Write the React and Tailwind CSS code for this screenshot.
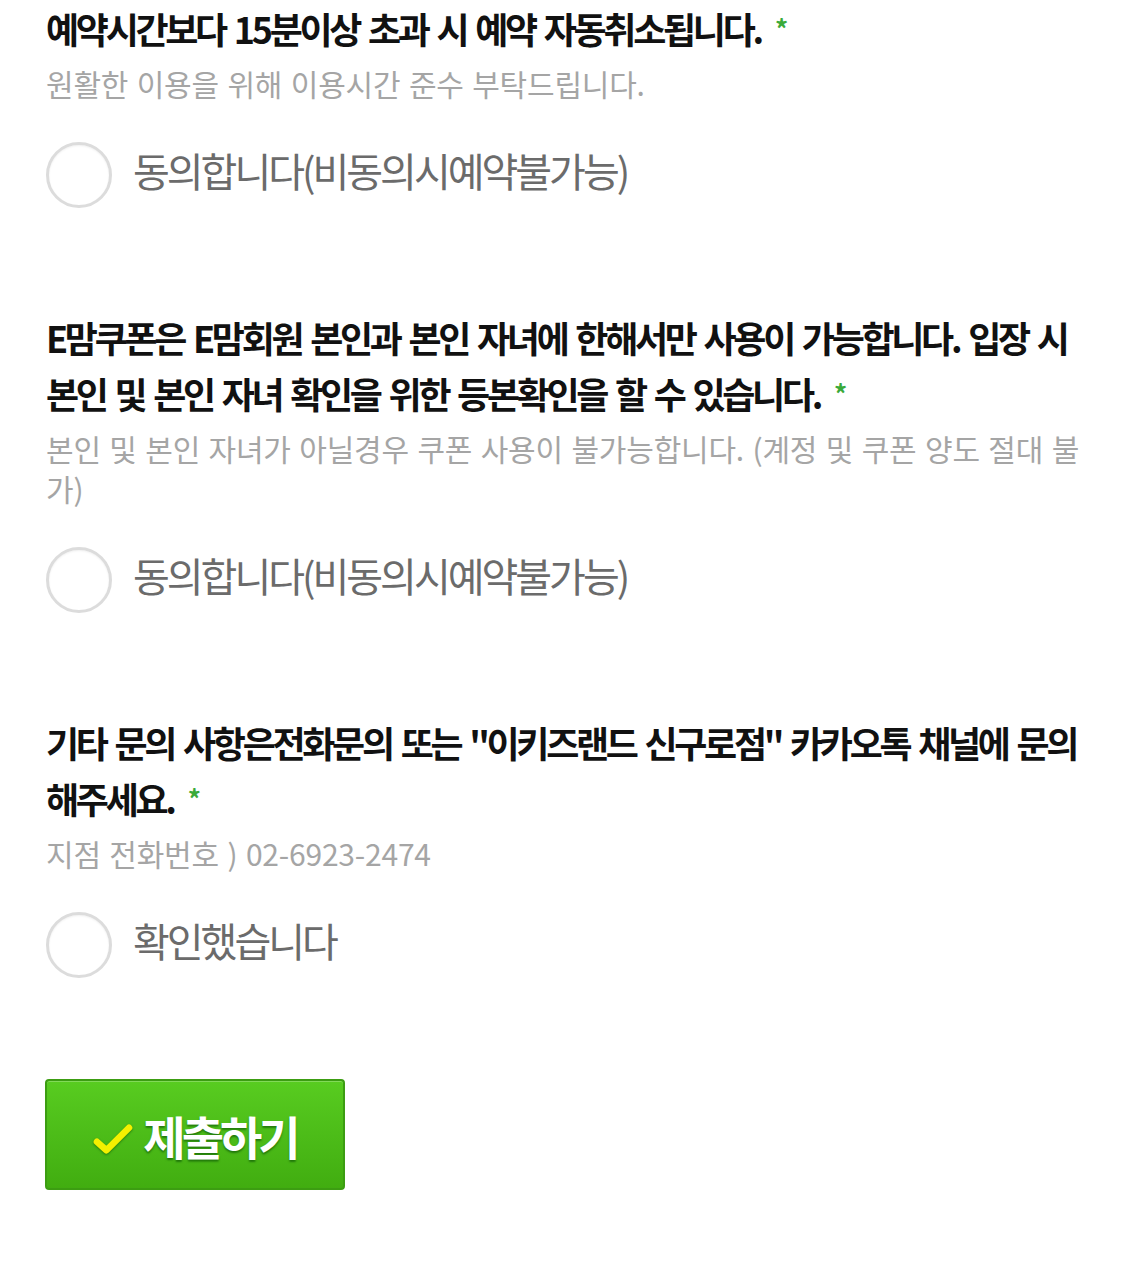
const FONT = { fontFamily: '"Noto Sans CJK KR", "Noto Sans", sans-serif' };

const sections = [
  {
    title: "예약시간보다 15분이상 초과 시 예약 자동취소됩니다.",
    desc: "원활한 이용을 위해 이용시간 준수 부탁드립니다.",
    option: "동의합니다(비동의시예약불가능)",
  },
  {
    title:
      "E맘쿠폰은 E맘회원 본인과 본인 자녀에 한해서만 사용이 가능합니다. 입장 시 본인 및 본인 자녀 확인을 위한 등본확인을 할 수 있습니다.",
    desc: "본인 및 본인 자녀가 아닐경우 쿠폰 사용이 불가능합니다. (계정 및 쿠폰 양도 절대 불가)",
    option: "동의합니다(비동의시예약불가능)",
  },
  {
    title: '기타 문의 사항은전화문의 또는 "이키즈랜드 신구로점" 카카오톡 채널에 문의해주세요.',
    desc: "지점 전화번호 ) 02-6923-2474",
    option: "확인했습니다",
  },
];

const Radio = () => (
  <span className="block w-[66px] h-[66px] shrink-0 rounded-full border-[3px] border-[#dcdcdc] bg-white shadow-[inset_0_1px_2px_rgba(0,0,0,0.06)]" />
);

const Question = ({ title, desc, option }) => (
  <div className="mb-[101px]">
    <p className="text-[36px] leading-[56px] font-bold text-[#111] tracking-[-3.3px] [word-spacing:4px]">
      {title}
      <span className="ml-[14px] text-[26px] align-top text-[#3aaa3a] tracking-normal">*</span>
    </p>
    <p className="mt-[7px] text-[30px] leading-[40px] text-[#a5a5a5] tracking-[-0.2px] [word-spacing:2px] break-all">
      {desc}
    </p>
    <div className="mt-[39px] flex items-center gap-[21px]">
      <Radio />
      <span className="-mt-[10px] text-[40px] leading-[50px] text-[#6b6b6b] tracking-[-3px]">
        {option}
      </span>
    </div>
  </div>
);

export default function App() {
  return (
    <div className="min-h-screen bg-white pl-[46px]" style={FONT}>
      <div className="w-[1040px]">
        {sections.map((s, i) => (
          <Question key={i} {...s} />
        ))}
        <button className="mt-[5px] -ml-px flex items-center justify-center gap-[10px] w-[300px] h-[111px] rounded-[4px] border-2 border-[#3c9d12] bg-gradient-to-b from-[#58cc20] to-[#41ad10] shadow-[inset_0_1px_0_rgba(255,255,255,0.25)]">
          <svg width="40" height="32" viewBox="0 0 42 34" className="mt-[8px] drop-shadow-[0_1px_1px_rgba(0,60,0,0.5)]">
            <path d="M4 20 L14 29 L38 5" fill="none" stroke="#f4f000" strokeWidth="7" strokeLinecap="round" strokeLinejoin="round" />
          </svg>
          <span className="text-[46px] leading-none font-bold text-white tracking-[-4px] [text-shadow:0_2px_2px_rgba(0,70,0,0.55)]">
            제출하기
          </span>
        </button>
      </div>
    </div>
  );
}
